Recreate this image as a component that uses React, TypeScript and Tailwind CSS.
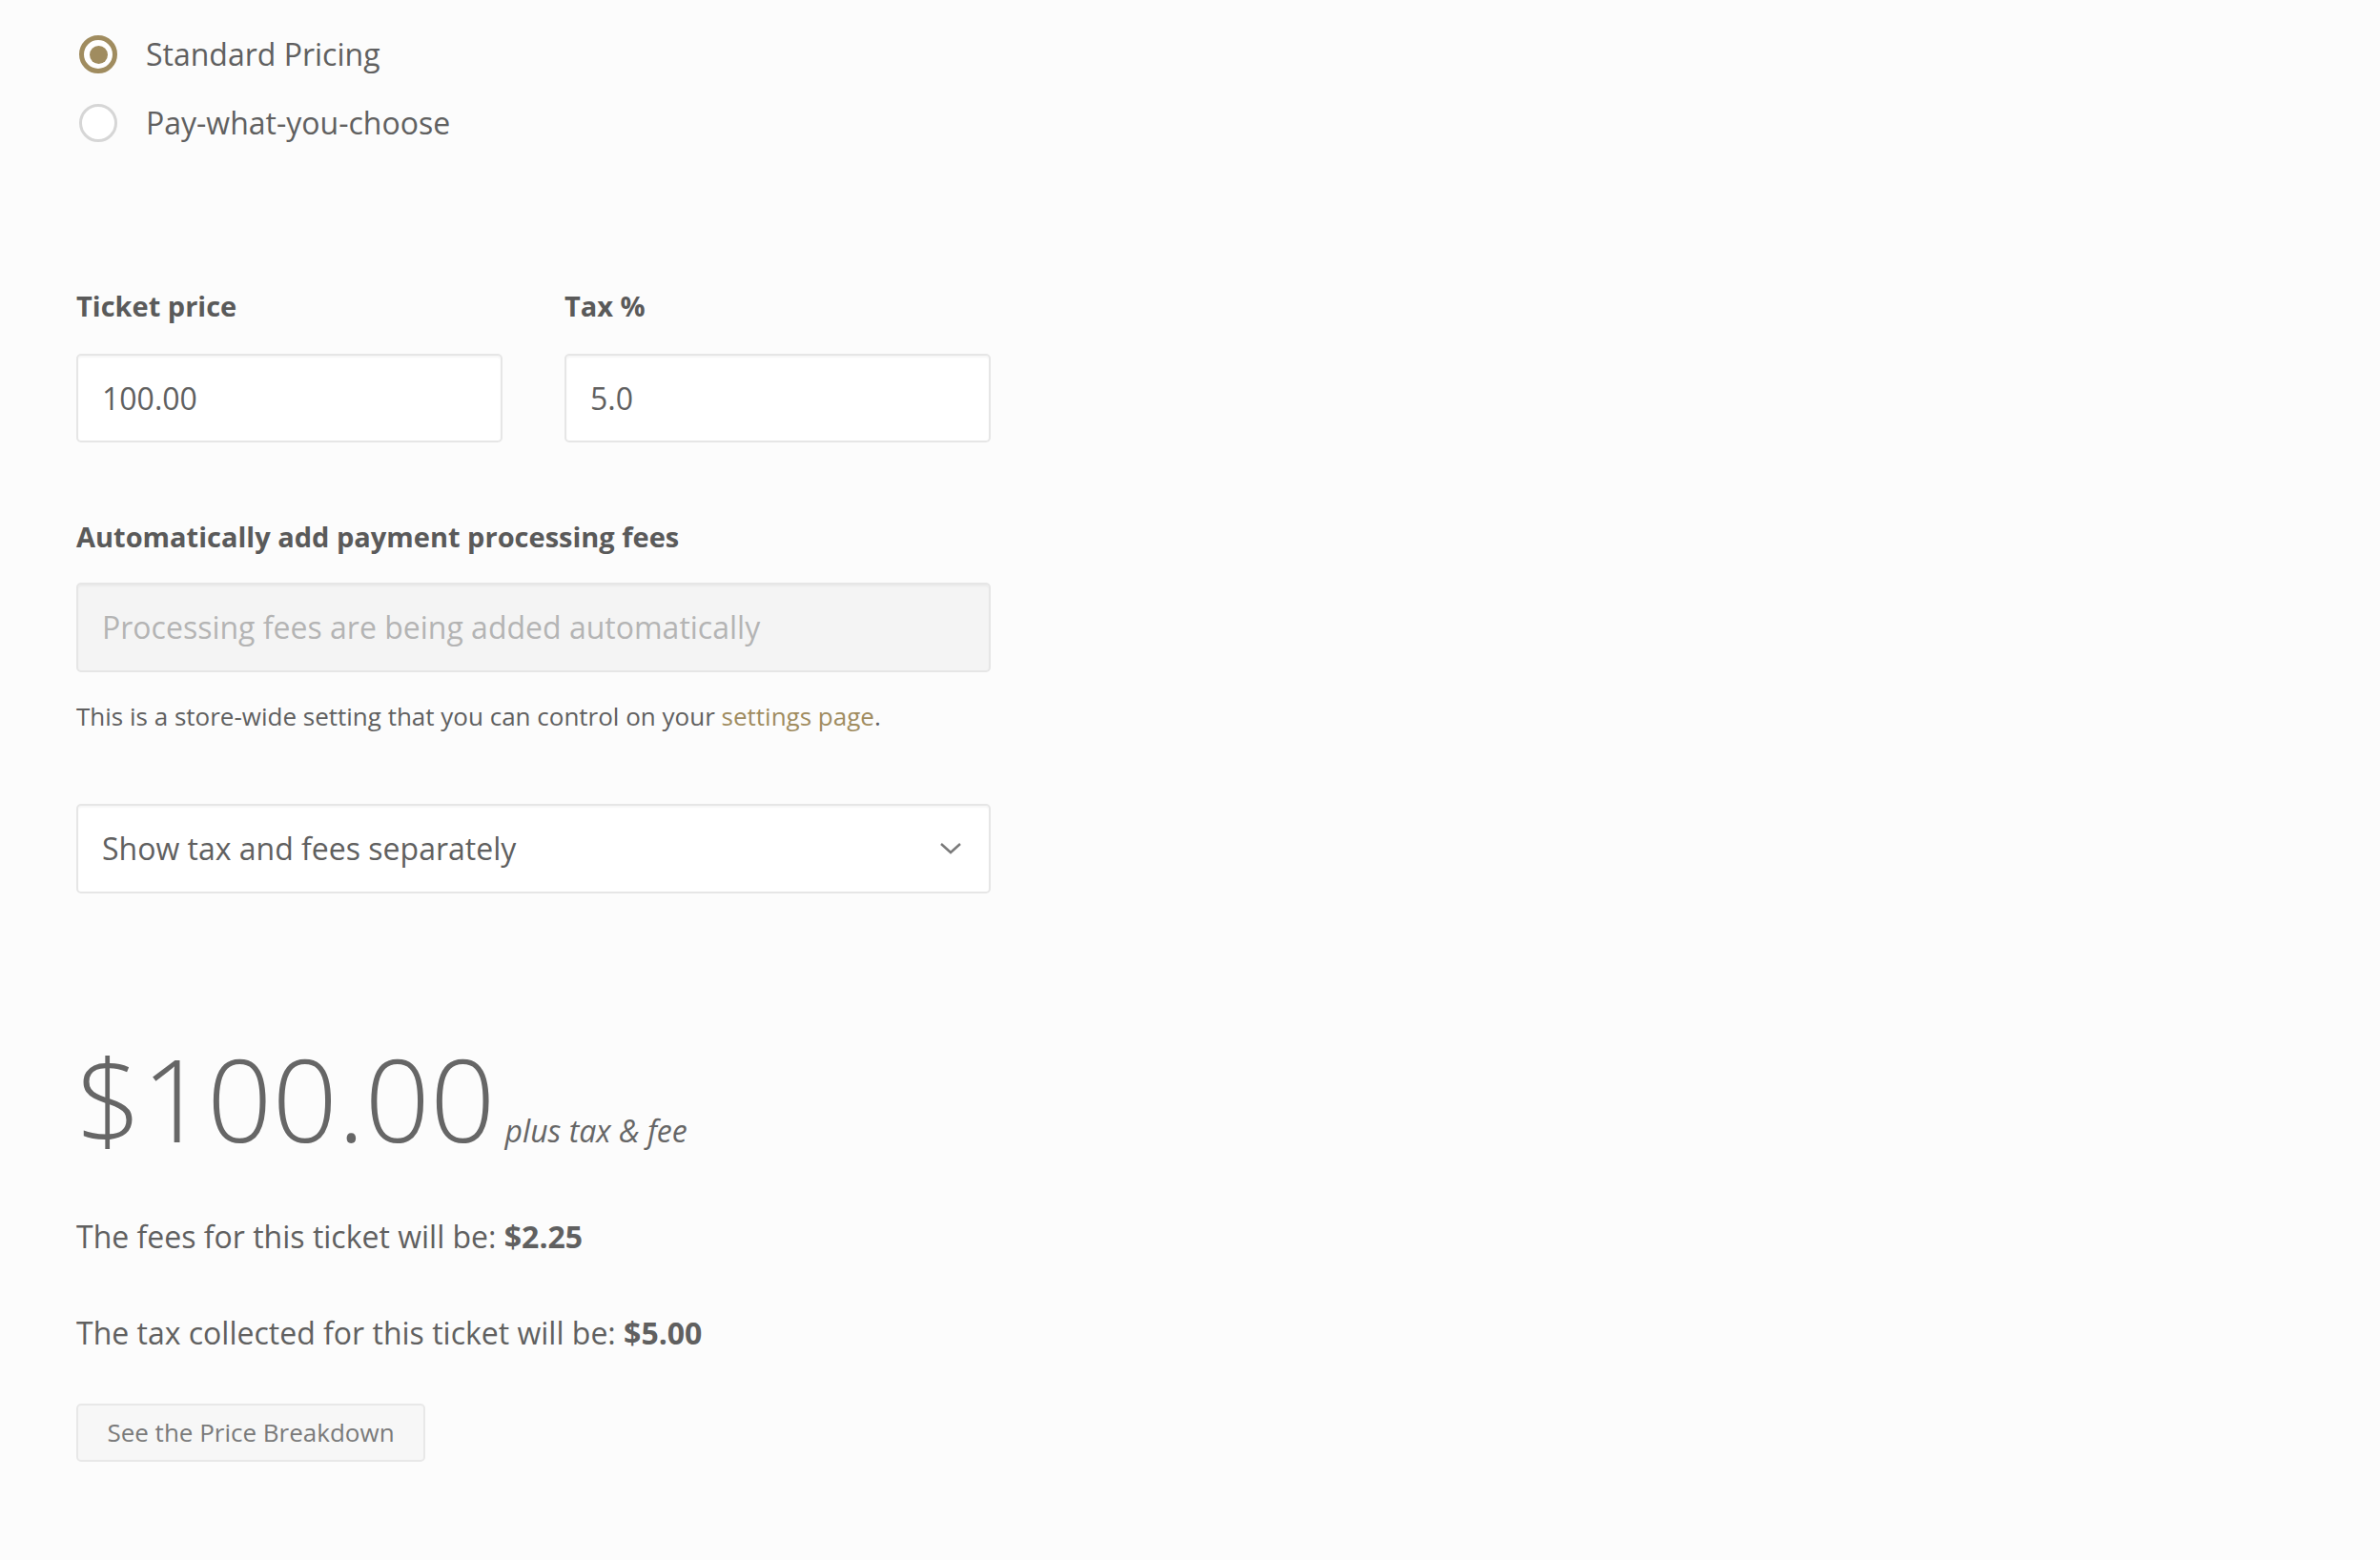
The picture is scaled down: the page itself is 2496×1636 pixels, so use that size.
import React from "react";

function Radio({ checked, label }: { checked: boolean; label: string }) {
  return (
    <label className="flex h-[72px] items-center">
      <span
        className={
          checked
            ? "ml-[3px] flex h-[40px] w-[40px] items-center justify-center rounded-full border-[5px] border-[#a08c5f] bg-white"
            : "ml-[3px] flex h-[40px] w-[40px] items-center justify-center rounded-full border-[3px] border-[#d6d6d6] bg-white"
        }
      >
        {checked && <span className="h-[19px] w-[19px] rounded-full bg-[#a08c5f]" />}
      </span>
      <span className="ml-[30px] text-[32px] leading-[40px] text-[#606060]">{label}</span>
    </label>
  );
}

export default function App() {
  return (
    <div
      className="min-h-screen bg-[#fcfcfc] pl-[80px] text-[#606060]"
      style={{ fontFamily: '"Open Sans", "Liberation Sans", sans-serif' }}
    >
      <div className="pt-[21px]">
        <Radio checked label="Standard Pricing" />
        <Radio checked={false} label="Pay-what-you-choose" />
      </div>

      <div className="mt-[136px] flex w-[959px] gap-[65px]">
        <div className="flex w-[447px] flex-col">
          <div className="text-[29px] font-bold leading-[40px] text-[#5a5a5a]">Ticket price</div>
          <div className="mt-[30px] flex h-[93px] items-center rounded-[5px] border-2 border-[#e6e6e6] bg-white pl-[25px] text-[32px] text-[#606060] shadow-[inset_0_2px_2px_rgba(0,0,0,0.04)]">
            100.00
          </div>
        </div>
        <div className="flex w-[447px] flex-col">
          <div className="text-[29px] font-bold leading-[40px] text-[#5a5a5a]">Tax %</div>
          <div className="mt-[30px] flex h-[93px] items-center rounded-[5px] border-2 border-[#e6e6e6] bg-white pl-[25px] text-[32px] text-[#606060] shadow-[inset_0_2px_2px_rgba(0,0,0,0.04)]">
            5.0
          </div>
        </div>
      </div>

      <div className="mt-[79px] w-[959px]">
        <div className="text-[29px] font-bold leading-[40px] text-[#5a5a5a]">
          Automatically add payment processing fees
        </div>
        <div className="mt-[28px] flex h-[94px] items-center rounded-[5px] border-2 border-[#e6e6e6] bg-[#f4f4f4] pl-[25px] text-[32px] text-[#b4b4b4] shadow-[inset_0_2px_2px_rgba(0,0,0,0.04)]">
          Processing fees are being added automatically
        </div>
        <div className="mt-[26px] text-[26px] leading-[40px] text-[#606060]">
          This is a store-wide setting that you can control on your{" "}
          <span className="text-[#a08c5f]">settings page</span>.
        </div>
      </div>

      <div className="mt-[72px] flex h-[94px] w-[959px] items-center justify-between rounded-[5px] border-2 border-[#e6e6e6] bg-white pl-[25px] pr-[28px] shadow-[inset_0_2px_2px_rgba(0,0,0,0.04)]">
        <span className="text-[32px] text-[#606060]">Show tax and fees separately</span>
        <svg width="24" height="14" viewBox="0 0 24 14" fill="none">
          <path d="M2 2 L12 11 L22 2" stroke="#7a7a7a" strokeWidth="2.5" />
        </svg>
      </div>

      <div className="mt-[155px] flex items-baseline">
        <span className="text-[120px] font-light leading-none text-[#666666]">$100.00</span>
        <span className="ml-[10px] text-[32px] italic text-[#666666]">plus tax &amp; fee</span>
      </div>

      <div className="mt-[65px] text-[32px] leading-[40px] text-[#606060]">
        The fees for this ticket will be: <span className="font-bold">$2.25</span>
      </div>
      <div className="mt-[61px] text-[32px] leading-[40px] text-[#606060]">
        The tax collected for this ticket will be: <span className="font-bold">$5.00</span>
      </div>

      <button className="mt-[54px] flex h-[61px] w-[366px] items-center justify-center rounded-[5px] border-2 border-[#e8e8e8] bg-[#f7f7f7] text-[26px] text-[#7a7a7a]">
        See the Price Breakdown
      </button>
    </div>
  );
}
